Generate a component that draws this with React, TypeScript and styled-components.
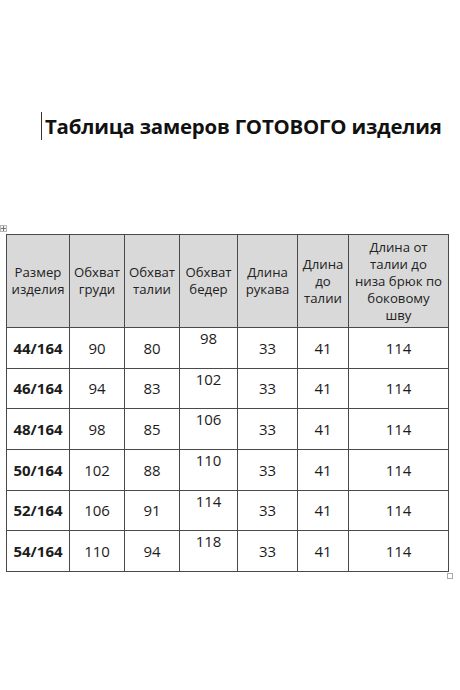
import React from "react";
import styled, { createGlobalStyle } from "styled-components";

const GlobalStyle = createGlobalStyle`
  html, body {
    margin: 0;
    padding: 0;
    background: #ffffff;
  }
  body {
    font-family: "Open Sans", "Noto Sans", sans-serif;
    color: #1c1c1c;
  }
`;

const Page = styled.div`
  width: 460px;
  height: 690px;
  box-sizing: border-box;
  padding-top: 112px;
  background: #ffffff;
`;

const TitleRow = styled.div`
  display: flex;
  align-items: center;
  height: 28px;
  padding-left: 41px;
  gap: 3px;
`;

const Caret = styled.span`
  width: 1px;
  height: 28px;
  background: #333;
`;

const Title = styled.h1`
  margin: 0;
  font-size: 20.4px;
  font-weight: 700;
  letter-spacing: -0.2px;
  color: #111;
  white-space: nowrap;
`;

const TableWrap = styled.div`
  position: relative;
  margin-top: 94px;
  margin-left: 6px;
  width: 442px;
`;

const MoveHandle = styled.div`
  position: absolute;
  left: -6px;
  top: -9px;
  width: 7px;
  height: 7px;
  border: 1px solid #b8b8b8;
  background: #f4f4f4;
  box-sizing: border-box;
  display: flex;
  align-items: center;
  justify-content: center;
`;

const ResizeHandle = styled.div`
  position: absolute;
  right: -5px;
  bottom: -7px;
  width: 6px;
  height: 6px;
  border: 1px solid #aaa;
  background: #fff;
  box-sizing: border-box;
`;

const Table = styled.table`
  border-collapse: collapse;
  table-layout: fixed;
  width: 442px;
`;

const HeadCell = styled.th`
  height: 92px;
  padding: 0 2px;
  background: #d9d9d9;
  border: 1px solid #4a4a4a;
  font-weight: 400;
  font-size: 13.2px;
  line-height: 17px;
  color: #222;
  text-align: center;
  vertical-align: middle;
`;

const Row = styled.tr`
  height: 40.67px;
`;

const Cell = styled.td<{ $bold?: boolean; $top?: boolean }>`
  padding: ${(p) => (p.$top ? "1px 2px 0" : "0 2px")};
  border: 1px solid #4a4a4a;
  font-size: 15px;
  font-weight: ${(p) => (p.$bold ? 700 : 400)};
  color: #1c1c1c;
  text-align: center;
  vertical-align: ${(p) => (p.$top ? "top" : "middle")};
  line-height: 18px;
`;

const widths = [63, 55, 55, 58, 60, 51, 100];

const headers = [
  ["Размер", "изделия"],
  ["Обхват", "груди"],
  ["Обхват", "талии"],
  ["Обхват", "бедер"],
  ["Длина", "рукава"],
  ["Длина", "до", "талии"],
  ["Длина от", "талии до", "низа брюк по", "боковому", "шву"],
];

const rows = [
  ["44/164", "90", "80", "98"],
  ["46/164", "94", "83", "102"],
  ["48/164", "98", "85", "106"],
  ["50/164", "102", "88", "110"],
  ["52/164", "106", "91", "114"],
  ["54/164", "110", "94", "118"],
];

function MoveIcon() {
  return (
    <svg width="5" height="5" viewBox="0 0 8 8">
      <path d="M4 0 L4 8 M0 4 L8 4" stroke="#666" strokeWidth="1.4" />
    </svg>
  );
}

export default function App() {
  return (
    <Page>
      <GlobalStyle />
      <TitleRow>
        <Caret />
        <Title>Таблица замеров ГОТОВОГО изделия</Title>
      </TitleRow>
      <TableWrap>
        <MoveHandle>
          <MoveIcon />
        </MoveHandle>
        <Table>
          <colgroup>
            {widths.map((w, i) => (
              <col key={i} style={{ width: w }} />
            ))}
          </colgroup>
          <thead>
            <tr>
              {headers.map((h, i) => (
                <HeadCell key={i}>
                  {h.map((line, j) => (
                    <React.Fragment key={j}>
                      {j > 0 && <br />}
                      {line}
                    </React.Fragment>
                  ))}
                </HeadCell>
              ))}
            </tr>
          </thead>
          <tbody>
            {rows.map((r) => (
              <Row key={r[0]}>
                <Cell $bold>{r[0]}</Cell>
                <Cell>{r[1]}</Cell>
                <Cell>{r[2]}</Cell>
                <Cell $top>{r[3]}</Cell>
                <Cell>33</Cell>
                <Cell>41</Cell>
                <Cell>114</Cell>
              </Row>
            ))}
          </tbody>
        </Table>
        <ResizeHandle />
      </TableWrap>
    </Page>
  );
}
